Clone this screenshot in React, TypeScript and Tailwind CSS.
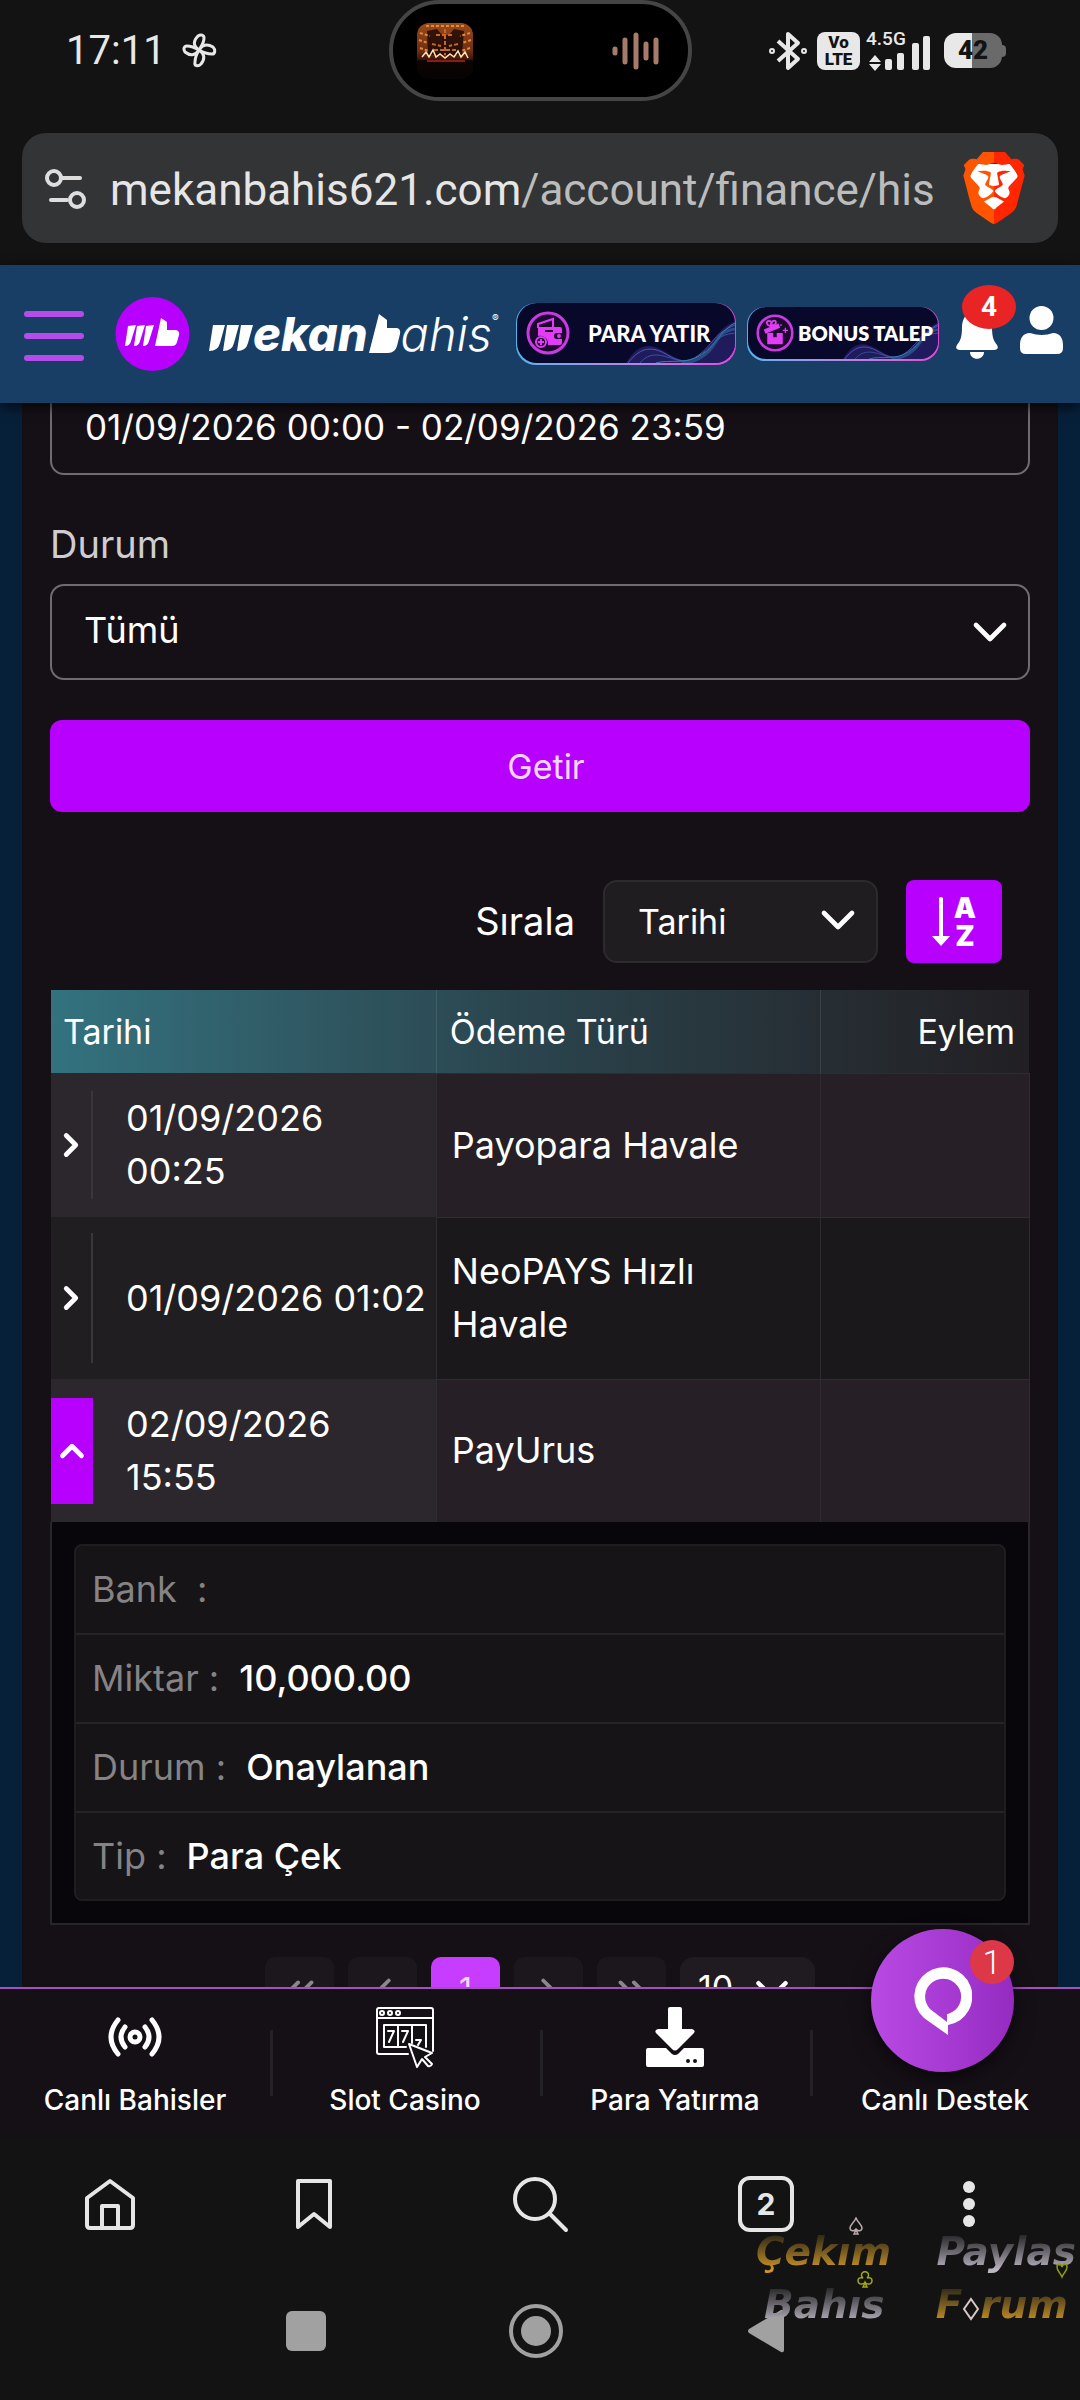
import React from "react";
import { ChevronDown, ChevronLeft, ChevronRight, ChevronsLeft, ChevronsRight, ChevronUp } from "lucide-react";
import { SiBrave } from "react-icons/si";

function StatusBar() {
  return (
    <div className="grid h-[101px] grid-cols-[1fr_303px_1fr] items-start text-[#e8e8e8]">
      <div className="flex h-[101px] items-center gap-4 pl-[66px]">
        <span className="font-[Roboto] text-[40px] leading-none">17:11</span>
        <svg width="36" height="36" viewBox="0 0 36 36" fill="none" stroke="currentColor" strokeWidth="3">
          <path d="M17 17c-6-4-6-9-1-14 3-2 6-1 6 2 0 5-2 7-5 12z" />
          <path d="M17 17c4-6 9-6 14-3 3 3 2 7-1 7-5 0-8-1-13-4z" />
          <path d="M17 17c6 4 6 9 2 14-3 3-7 2-6-2 0-4 1-7 4-12z" />
          <path d="M17 17c-4 6-9 6-14 2-2-3-1-6 2-6 4 0 7 1 12 4z" />
        </svg>
      </div>
      <div className="flex h-[101px] items-center justify-between rounded-full border-4 border-[#454545] bg-black pr-7 pl-6">
        <svg width="56" height="56" viewBox="0 0 56 56">
          <defs>
            <linearGradient id="art" x1="0" y1="0" x2="0" y2="1">
              <stop offset="0" stopColor="#9a4a1c" />
              <stop offset="0.5" stopColor="#6e2e12" />
              <stop offset="0.7" stopColor="#2c0c06" />
              <stop offset="1" stopColor="#050202" />
            </linearGradient>
            <clipPath id="artClip">
              <rect width="56" height="56" rx="12" />
            </clipPath>
          </defs>
          <g clipPath="url(#artClip)">
            <rect width="56" height="56" fill="url(#art)" />
            <path d="M10 8l10-2 5 6h7l5-6 10 2-2 24H11z" fill="#1a0804" fillOpacity=".8" />
            <path d="M9 3h38M3 10l10 3M53 10l-10 3M2 17l9 3M54 17l-9 3M3 25l9 3M53 25l-9 3" stroke="#e28a3c" strokeWidth="2" strokeDasharray="3 2" />
            <path d="M28 6v26M19 12h18M15 21l9 2M41 21l-9 2M17 27h22" stroke="#c4692b" strokeWidth="2" strokeDasharray="4 2" />
            <path d="M5 34l4-5 3 5 4-7 3 7 4-3 5 4 5-4 4 3 4-6 3 6 4-5 3 6" stroke="#ffe0b0" strokeWidth="1.5" fill="none" />
            <rect y="37" width="56" height="19" fill="#070303" fillOpacity=".85" />
            <path d="M10 38h38" stroke="#8d1a14" strokeWidth="2" />
          </g>
        </svg>
        <svg width="48" height="40" viewBox="0 0 48 40" stroke="#a67b69" strokeWidth="5" strokeLinecap="round">
          <path d="M3 18v4M13 9v22M24 4v32M34 13v14M44 9v22" />
        </svg>
      </div>
      <div className="flex h-[101px] items-center justify-end pr-[74px]">
        <svg width="38" height="40" viewBox="0 0 38 40" fill="none" stroke="currentColor" strokeWidth="4" strokeLinejoin="round">
          <path d="M9 10l20 18-10 9V3l10 9L9 30" />
          <circle cx="3" cy="20" r="1" />
          <circle cx="35" cy="20" r="1" />
        </svg>
        <div className="ml-2.5 flex h-[38px] w-[43px] flex-col items-center justify-center rounded-lg bg-[#e8e8e8] font-[Roboto] text-[17px] leading-[17px] font-black text-[#131313]">
          <span>Vo</span>
          <span>LTE</span>
        </div>
        <div className="ml-1.5 flex flex-col items-start">
          <span className="font-[Roboto] text-[19px] leading-4 font-medium">4.5G</span>
          <svg className="-mt-3" width="66" height="36" viewBox="0 0 66 36" fill="currentColor">
            <path d="M9 20l6 7H3zM9 36l6-7H3z" />
            <rect x="19" y="24" width="7" height="11" rx="2" />
            <rect x="31" y="18" width="7" height="17" rx="2" />
            <rect x="46" y="8" width="7" height="27" rx="2" />
            <rect x="57" y="1" width="7" height="34" rx="2" />
          </svg>
        </div>
        <div className="ml-3 flex items-center">
          <div className="flex h-[35px] w-[58px] items-center justify-center rounded-xl bg-linear-to-r from-[#e8e8e8] from-48% to-[#6a6a6a] to-48% font-[Roboto] text-[26px] font-black text-[#131313]">
            42
          </div>
          <div className="h-3 w-1 rounded-r bg-[#6a6a6a]" />
        </div>
      </div>
    </div>
  );
}

function AddressBar() {
  return (
    <div className="px-[22px] pt-8 pb-[22px]">
      <div className="flex h-[110px] items-center rounded-[24px] bg-[#323436] pr-[28px] pl-[22px]">
        <button type="button" aria-label="Site ayarları" className="shrink-0">
          <svg width="44" height="42" viewBox="0 0 44 42" fill="none" stroke="#dedede" strokeWidth="4" strokeLinecap="round">
            <circle cx="10" cy="11" r="7" />
            <path d="M18 11h18M7 33h16" />
            <circle cx="33" cy="33" r="7" />
          </svg>
        </button>
        <div className="ml-[22px] flex-1 overflow-hidden pt-1 font-[Roboto] text-[44px] whitespace-nowrap text-[#e6e6e6]">
          mekanbahis621.com<span className="text-[#bcbcbc]">/account/finance/his</span>
        </div>
        <button type="button" aria-label="Brave" className="relative shrink-0">
          <svg className="absolute inset-0" width="72" height="72" viewBox="0 0 24 24">
            <defs>
              <linearGradient id="braveFill">
                <stop offset="0.5" stopColor="#ff5500" />
                <stop offset="0.5" stopColor="#ff2600" />
              </linearGradient>
            </defs>
            <path d="M6 4h12l2 4-2 8-6 5-6-5-2-8z" fill="#fff" />
          </svg>
          <SiBrave size={72} className="relative [fill:url(#braveFill)]" />
        </button>
      </div>
    </div>
  );
}

function Waves() {
  return (
    <svg className="absolute right-0 bottom-0 h-full w-1/2" viewBox="0 0 110 60" preserveAspectRatio="none" fill="none">
      <path d="M0 60c12-20 24-20 38-12s24 14 36 6 14-26 36-36v42z" fill="#2f2880" fillOpacity=".6" />
      <path d="M2 60c14-18 26-16 40-8s22 8 34-2 14-20 34-28" stroke="#5a56b8" strokeWidth="1" />
      <path d="M14 60c10-12 22-8 34-4s20 2 32-8 12-16 30-18" stroke="#34599c" strokeWidth="1" />
      <path d="M30 60c14-4 30 2 46-8s18-24 34-32" stroke="#3d7fb0" strokeWidth="1" />
      <path d="M56 60c16 0 28-10 34-20s10-12 20-14" stroke="#2a6e9c" strokeWidth="3" strokeOpacity=".6" />
    </svg>
  );
}

function WalletIcon() {
  return (
    <svg className="relative shrink-0" width="44" height="44" viewBox="0 0 44 44">
      <circle cx="22" cy="22" r="20" fill="#1c0830" stroke="#c93be0" strokeWidth="3" />
      <path d="M12 17v-4l15-5v8" fill="none" stroke="#e23cf5" strokeWidth="2" />
      <path d="M12 16h22a2 2 0 0 1 2 2v4h-5a3 3 0 0 0 0 6h5v4a2 2 0 0 1-2 2H22a8 8 0 0 0-10-9z" fill="#e23cf5" />
      <path d="M19 20h8" stroke="#1c0830" strokeWidth="2" />
      <circle cx="33" cy="25" r="2" fill="#e23cf5" />
      <circle cx="15" cy="31" r="5" fill="#1c0830" stroke="#e23cf5" strokeWidth="2" />
      <path d="M15 28v6M12 31h6" stroke="#e23cf5" strokeWidth="2" />
    </svg>
  );
}

function GiftIcon() {
  return (
    <svg className="relative shrink-0" width="38" height="38" viewBox="0 0 44 44">
      <circle cx="22" cy="22" r="20" fill="#1c0830" stroke="#c93be0" strokeWidth="3" />
      <path d="M9 18l17-7 2 5-17 7z" fill="#e23cf5" />
      <path d="M17 14c-5-1-6-6-2-6s4 5 2 6c0-6 5-8 6-5s-3 4-6 5" fill="none" stroke="#e23cf5" strokeWidth="2" />
      <path d="M13 22h7v5h4v-5h7v13H13z" fill="#e23cf5" />
      <path d="M34 16v6M31 19h6M29 12v2" stroke="#e23cf5" strokeWidth="1.5" />
    </svg>
  );
}

function BrandLogo() {
  return (
    <a href="#home" aria-label="Mekanbahis" className="flex shrink-0 items-center text-white">
      <svg width="75" height="76" viewBox="0 0 75 76">
        <circle cx="37.500" cy="38" r="37" fill="#b800ff" />
        <g fill="#fff">
          <path d="M13 30l8-1-5 16q-1 5-6 5zM22 30l8-1-5 16q-1 5-6 5zM31 30l8-1-5 16q-1 5-6 5z" />
          <path d="M46 22l6 4v8h9q4 1 3 5l-2 7q-1 4-5 4H40z" />
        </g>
      </svg>
      <div className="ml-[19px] flex items-center">
        <svg className="mt-2" width="44" height="28" viewBox="0 0 44 28" fill="#fff">
          <path d="M4 1h12l-5 18q-2 8-11 8zM18 1h12l-5 18q-2 8-11 8zM32 1h12l-5 18q-2 8-11 8z" />
        </svg>
        <span className="font-[Inter] text-[47px] leading-[50px] font-extrabold italic">ekan</span>
        <svg width="33" height="40" viewBox="0 0 33 40" fill="#fff">
          <path d="M11 0l8 6v8h10q4 1 3 6l-3 12q-2 7-9 7H1z" />
        </svg>
        <span className="font-[Inter] text-[47px] leading-[50px] font-light italic">ahis</span>
        <span className="mb-8 font-[Inter] text-[10px] leading-none">®</span>
      </div>
    </a>
  );
}

function SiteHeader() {
  return (
    <header className="relative z-10 flex h-[138px] shrink-0 items-center bg-[#193e65] pr-[17px] pl-6 shadow-[0_4px_12px_rgba(0,0,0,0.7)]">
      <button type="button" aria-label="Menü" className="mt-1 flex w-[60px] shrink-0 flex-col gap-4">
        <span className="h-[6px] rounded-full bg-[#b54cea]" />
        <span className="h-[6px] rounded-full bg-[#b54cea]" />
        <span className="h-[6px] rounded-full bg-[#b54cea]" />
      </button>
      <div className="ml-[31px]">
        <BrandLogo />
      </div>
      <div className="ml-auto flex items-center">
        <div className="w-[220px] rounded-[20px] bg-linear-to-r from-[#4fb4f0] to-[#e046d8] px-px pb-[2px]">
          <button type="button" className="relative flex h-[60px] w-full items-center overflow-hidden rounded-[20px] bg-[#08082a] pl-[9px] font-[Lato] text-[22px] font-black whitespace-nowrap text-white">
            <Waves />
            <WalletIcon />
            <span className="relative ml-[18px]">PARA YATIR</span>
          </button>
        </div>
        <div className="ml-[11px] w-[192px] rounded-[18px] bg-linear-to-r from-[#4fb4f0] to-[#e046d8] px-px pb-[2px]">
          <button type="button" className="relative flex h-[52px] w-full items-center overflow-hidden rounded-[18px] bg-[#08082a] pl-[8px] font-[Lato] text-[20px] font-extrabold whitespace-nowrap text-white">
            <Waves />
            <GiftIcon />
            <span className="relative ml-[4px]">BONUS TALEP</span>
          </button>
        </div>
        <button type="button" aria-label="Bildirimler" className="relative ml-[17px]">
          <svg width="42" height="50" viewBox="0 0 42 50" fill="#fff">
            <path d="M21 2c10 0 15 7 15 16 0 11 2 14 5 18 2 3 0 5-3 5H4c-3 0-5-2-3-5 3-4 5-7 5-18C6 9 11 2 21 2zM14 43h14c0 9-14 9-14 0z" />
          </svg>
          <span className="absolute -top-6 left-[6px] flex h-[44px] w-[54px] items-center justify-center rounded-[50%] bg-[#e82424] font-[Roboto] text-[28px] font-bold text-white">4</span>
        </button>
        <button type="button" aria-label="Hesabım" className="mb-2 ml-[22px]">
          <svg width="43" height="48" viewBox="0 0 43 48" fill="#fff">
            <circle cx="21.500" cy="12" r="12" />
            <path d="M10 27q12 4 23 0c7 0 10 5 10 12v3q0 6-6 6H6q-6 0-6-6v-3c0-7 3-12 10-12z" />
          </svg>
        </button>
      </div>
    </header>
  );
}

function Filters() {
  return (
    <form onSubmit={(event) => event.preventDefault()}>
      <input
        aria-label="Tarih aralığı"
        defaultValue="01/09/2026 00:00 - 02/09/2026 23:59"
        className="-mt-6 block h-24 w-full rounded-[14px] border-2 border-[#6f6b70] bg-transparent px-[33px] text-[35px] text-white"
      />
      <label htmlFor="status" className="mt-[43px] block text-[38px] leading-[53px] text-[#cfcdcf]">
        Durum
      </label>
      <div className="relative mt-[13px]">
        <select id="status" className="block h-24 w-full appearance-none rounded-[14px] border-2 border-[#6f6b70] bg-transparent px-[32px] pb-1 text-[36px] text-white">
          <option>Tümü</option>
        </select>
        <ChevronDown className="pointer-events-none absolute top-5 right-3 text-white" size={56} strokeWidth={2} />
      </div>
      <button type="submit" className="mt-10 block h-[92px] w-full rounded-xl bg-[#b800ff] pl-3 text-[34px] text-[#f5d6ff]">
        Getir
      </button>
    </form>
  );
}

function SortBar() {
  return (
    <div className="mt-[68px] flex items-center justify-end pr-7">
      <label htmlFor="sort" className="text-[38px] leading-[53px] text-white">
        Sırala
      </label>
      <div className="relative ml-7">
        <select id="sort" className="block h-[83px] w-[275px] appearance-none rounded-[14px] border-2 border-[#2c2a2d] bg-[#1f1d20] px-[33px] text-[34px] text-white">
          <option>Tarihi</option>
        </select>
        <ChevronDown className="pointer-events-none absolute top-3 right-3 text-white" size={56} strokeWidth={2} />
      </div>
      <button type="button" aria-label="Sıralama yönü" className="ml-7 flex h-[83px] w-24 items-center justify-center rounded-lg bg-[#b800ff] text-white">
        <svg width="18" height="50" viewBox="0 0 18 50" fill="#fff">
          <path d="M7 1q2-2 4 0v38h7l-9 10-9-10h7z" />
        </svg>
        <span className="ml-1 flex flex-col items-center text-[28px] leading-7 font-black">
          <span>A</span>
          <span>Z</span>
        </span>
      </button>
    </div>
  );
}

type Transaction = { date: string; method: string; open?: boolean };

const transactions: Transaction[] = [
  { date: "01/09/2026 00:25", method: "Payopara Havale" },
  { date: "01/09/2026 01:02", method: "NeoPAYS Hızlı Havale" },
  { date: "02/09/2026 15:55", method: "PayUrus", open: true },
];

const details = [
  { label: "Bank  :", value: "" },
  { label: "Miktar :", value: "10,000.00" },
  { label: "Durum :", value: "Onaylanan" },
  { label: "Tip :", value: "Para Çek" },
];

const rowStyles = [
  { row: "h-[144px] bg-[#261f25]", date: "bg-[#2c272c]", text: "pr-20", toggle: "min-h-[108px]" },
  { row: "h-[162px] bg-[#1a181a]", date: "bg-[#201e20]", text: "", toggle: "min-h-[130px]" },
  { row: "h-[143px] bg-[#261f25]", date: "bg-[#2c272c]", text: "pr-20", toggle: "" },
];

function TransactionTable() {
  return (
    <table className="mt-[27px] w-full table-fixed border-collapse text-left text-[36px] leading-[53px] text-white">
      <colgroup>
        <col className="w-[39.4%]" />
        <col className="w-[39.3%]" />
        <col />
      </colgroup>
      <thead>
        <tr className="h-[83px] bg-linear-to-r from-[#33727f] via-[#2a434c] to-[#211f23] text-[34px]">
          <th className="border-r border-white/10 pl-[12px] font-normal">Tarihi</th>
          <th className="border-r border-white/10 pl-[13px] font-normal">Ödeme Türü</th>
          <th className="pr-[14px] text-right font-normal">Eylem</th>
        </tr>
      </thead>
      <tbody>
        {transactions.map((item, index) => (
          <tr key={item.date} className={rowStyles[index].row}>
            <td className={`border-r border-[#2f2c31] p-0 ${rowStyles[index].date}`}>
              <div className="flex items-stretch">
                {item.open ? (
                  <button type="button" aria-label="Kapat" className="flex w-[42px] shrink-0 items-center justify-center bg-[#b800ff]">
                    <ChevronUp size={38} strokeWidth={3} />
                  </button>
                ) : (
                  <button type="button" aria-label="Aç" className={`flex w-[42px] shrink-0 items-center justify-center border-r-2 border-[#3a373b] ${rowStyles[index].toggle}`}>
                    <ChevronRight size={38} strokeWidth={3} />
                  </button>
                )}
                <span className={`self-center pl-[33px] ${rowStyles[index].text}`}>{item.date}</span>
              </div>
            </td>
            <td className="border-t border-r border-[#2f2c31] pr-12 pl-[15px]">{item.method}</td>
            <td className="border-t border-r border-[#2f2c31]" />
          </tr>
        ))}
        <tr>
          <td colSpan={3} className="border-2 border-t-0 border-[#29262a] bg-[#08060a] px-[22px] pt-[22px] pb-[22px]">
            <dl className="rounded-lg border-2 border-[#1e1d20] bg-[#161416]">
              {details.map((entry) => (
                <div key={entry.label} className="flex h-[89px] items-center gap-[20px] border-b-2 border-[#252427] px-4 last:h-[86px] last:border-b-0">
                  <dt className="whitespace-pre text-[#858385]">{entry.label}</dt>
                  <dd className="font-medium">{entry.value}</dd>
                </div>
              ))}
            </dl>
          </td>
        </tr>
      </tbody>
    </table>
  );
}

function Pagination() {
  const idle = "flex h-[69px] w-[69px] items-center justify-center rounded-[10px] bg-[#1b171c] text-[#8a888a]";
  return (
    <div className="mt-8 flex justify-center gap-[14px]">
      <button type="button" aria-label="İlk sayfa" className={idle}><ChevronsLeft size={46} /></button>
      <button type="button" aria-label="Önceki sayfa" className={idle}><ChevronLeft size={46} /></button>
      <button type="button" className="flex h-[69px] w-[69px] items-center justify-center rounded-[10px] bg-[#c63dff] pb-1 text-[32px] text-[#f5d6ff]">1</button>
      <button type="button" aria-label="Sonraki sayfa" className={idle}><ChevronRight size={46} /></button>
      <button type="button" aria-label="Son sayfa" className={idle}><ChevronsRight size={46} /></button>
      <div className="relative">
        <select aria-label="Sayfa boyutu" className="h-[69px] w-[135px] appearance-none rounded-[14px] bg-[#201b21] px-[18px] pb-2 text-[34px] text-white">
          <option>10</option>
        </select>
        <ChevronDown className="pointer-events-none absolute top-1.5 right-4 text-white" size={54} />
      </div>
    </div>
  );
}

function LiveIcon() {
  return (
    <svg width="54" height="42" viewBox="0 0 54 42" fill="none" stroke="#fff" strokeWidth="5" strokeLinecap="round">
      <circle cx="27" cy="21" r="5" />
      <path d="M17 11q-8 10 0 20M37 11q8 10 0 20M10 4Q-4 21 10 38M44 4q14 17 0 34" />
    </svg>
  );
}

function SlotIcon() {
  return (
    <svg width="60" height="62" viewBox="0 0 60 62" fill="none" stroke="#fff" strokeWidth="2" strokeLinejoin="round" strokeLinecap="round">
      <path d="M33 48H4q-2 0-2-2V4q0-2 2-2h52q2 0 2 2v41M2 12h56" />
      <circle cx="7" cy="7" r="2" />
      <circle cx="15" cy="7" r="2" />
      <circle cx="23" cy="7" r="2" />
      <path d="M31 41H9V19h42v22M23 19v22M37 19v18M13 25h6l-5 11M27 25h6l-5 11M41 34h5l-3 5" />
      <path d="M34 38l8 23 5-8 6 7q3 1 4-2l-7-7 7-4z" fill="#151016" />
    </svg>
  );
}

function DepositIcon() {
  return (
    <svg width="58" height="62" viewBox="0 0 58 62" fill="#fff">
      <path d="M24 1h10q2 0 2 2v20h10q4 1 2 4L32 43q-3 3-6 0L10 27q-2-3 2-4h10V3q0-2 2-2z" />
      <path d="M2 42h18l6 6q3 2 6 0l6-6h18q2 0 2 2v15q0 2-2 2H2q-2 0-2-2V44q0-2 2-2z" />
      <circle cx="42" cy="55" r="2" fill="#151016" />
      <circle cx="49" cy="55" r="2" fill="#151016" />
    </svg>
  );
}

const shortcuts = [
  { label: "Canlı Bahisler", icon: <LiveIcon /> },
  { label: "Slot Casino", icon: <SlotIcon /> },
  { label: "Para Yatırma", icon: <DepositIcon /> },
  { label: "Canlı Destek", icon: null },
];

function ShortcutBar() {
  return (
    <nav className="relative z-10 grid h-[151px] shrink-0 grid-cols-4 border-t-2 border-[#a44fc0] bg-[#151016]">
      {shortcuts.map((item) => (
        <a key={item.label} href="#shortcut" className="group relative flex flex-col items-center pt-[17px] text-[28px] leading-10 font-medium whitespace-nowrap text-white">
          <span className="flex h-[62px] items-center">{item.icon}</span>
          <span className="mt-3">{item.label}</span>
          <span className="absolute top-[41px] left-0 h-[66px] w-[3px] bg-[#232125] group-first:hidden" />
        </a>
      ))}
      <button type="button" aria-label="Canlı destek" className="absolute -top-[60px] right-[66px] flex h-[143px] w-[143px] items-center justify-center rounded-full bg-linear-to-r from-[#b94ae4] to-[#962bc2] shadow-[0_6px_20px_rgba(0,0,0,0.6)]">
        <svg width="58" height="68" viewBox="0 0 58 68" fill="#fff" fillRule="evenodd">
          <path d="M34 68L10 51A29 29 0 1 1 34 58zM34 47A18 18 0 1 0 16 42L33 55V47z" />
        </svg>
        <span className="absolute top-[11px] right-0 flex h-11 w-11 items-center justify-center rounded-full bg-[#dc3848] font-[Roboto] text-[34px] font-light text-white">1</span>
      </button>
    </nav>
  );
}

function BrowserToolbar() {
  return (
    <nav className="grid h-[132px] shrink-0 grid-cols-[220fr_188fr_266fr_184fr_222fr] items-center justify-items-center text-[#e6e6e6]">
      <button type="button" aria-label="Ana sayfa">
        <svg width="52" height="52" viewBox="0 0 52 52" fill="none" stroke="currentColor" strokeWidth="4" strokeLinejoin="round">
          <path d="M26 3l23 17v27q0 3-3 3H6q-3 0-3-3V20z" />
          <path d="M18 50V28h16v22" />
        </svg>
      </button>
      <button type="button" aria-label="Yer imleri">
        <svg width="38" height="52" viewBox="0 0 38 52" fill="none" stroke="currentColor" strokeWidth="4" strokeLinejoin="round">
          <path d="M3 3h32v46L19 36 3 49z" />
        </svg>
      </button>
      <button type="button" aria-label="Ara">
        <svg width="58" height="58" viewBox="0 0 58 58" fill="none" stroke="currentColor" strokeWidth="4" strokeLinecap="round">
          <circle cx="23" cy="24" r="20" />
          <path d="M38 39l16 16" />
        </svg>
      </button>
      <button type="button" aria-label="Sekmeler" className="flex h-14 w-14 items-center justify-center rounded-xl border-4 border-current text-[30px] font-bold">
        2
      </button>
      <button type="button" aria-label="Diğer" className="flex flex-col gap-[5px]">
        <span className="size-3 rounded-full bg-current" />
        <span className="size-3 rounded-full bg-current" />
        <span className="size-3 rounded-full bg-current" />
      </button>
    </nav>
  );
}

function SystemNav() {
  return (
    <nav className="flex h-[130px] shrink-0 justify-center pr-2 pb-2 text-[#a1a1a1]">
      <button type="button" aria-label="Son uygulamalar" className="flex w-[230px] items-center justify-center">
        <span className="size-10 rounded-md bg-current" />
      </button>
      <button type="button" aria-label="Ana ekran" className="flex w-[230px] items-center justify-center">
        <svg width="54" height="54" viewBox="0 0 54 54">
          <circle cx="27" cy="27" r="25" fill="none" stroke="currentColor" strokeWidth="4" />
          <circle cx="27" cy="27" r="15" fill="currentColor" />
        </svg>
      </button>
      <button type="button" aria-label="Geri" className="flex w-[230px] items-center justify-center">
        <svg width="38" height="44" viewBox="0 0 38 44" fill="currentColor">
          <path d="M36 1q1 0 1 2v38q0 3-3 2L2 24q-2-2 0-4L34 1z" />
        </svg>
      </button>
    </nav>
  );
}

function Watermark() {
  const gold = "bg-linear-to-b from-[#2a2514] from-15% to-[#d09622] to-85% bg-clip-text text-transparent";
  const silver = "bg-linear-to-b from-[#222224] from-15% to-[#bdb6c4] to-85% bg-clip-text text-transparent";
  return (
    <div className="pointer-events-none absolute right-0 bottom-[69px] z-20 w-[324px] font-['DejaVu_Sans'] text-[39px] leading-[53px] font-bold whitespace-nowrap italic">
      <div className="flex justify-between pr-1">
        <span className={gold}>Çekım</span>
        <span className={silver}>Paylas</span>
      </div>
      <div className="flex justify-between pr-3 pl-2">
        <span className={silver}>Bahıs</span>
        <span className="flex items-center">
          <span className={gold}>F</span>
          <svg className="mt-2" width="18" height="24" viewBox="0 0 18 24" fill="none" stroke="#d8c8c8" strokeWidth="2">
            <path d="M9 2l7 10-7 10-7-10z" />
          </svg>
          <span className={gold}>rum</span>
        </span>
      </div>
      <svg className="absolute -top-2 left-[93px]" width="14" height="18" viewBox="0 0 14 18" fill="none" stroke="#b8a8a8" strokeWidth="1.5">
        <path d="M7 1C5 6 1 8 1 11s4 4 6 1c2 3 6 2 6-1S9 6 7 1zM7 13l-2 4h4z" />
      </svg>
      <svg className="absolute top-[46px] left-[101px]" width="16" height="18" viewBox="0 0 16 18" fill="none" stroke="#a0a812" strokeWidth="1.5">
        <path d="M6 7a3.500 3.500 0 1 1 4 0c7-2 6 7 1 6-2 0-3-2-3-2s-1 2-3 2c-5 1-6-8 1-6zM8 12l-2 4h4z" />
      </svg>
      <svg className="absolute top-[38px] right-[12px]" width="12" height="16" viewBox="0 0 12 16" fill="none" stroke="#8c9a10" strokeWidth="1.5">
        <path d="M6 14C4 9 1 8 1 4s4-4 5 0c1-4 5-4 5 0s-3 5-5 10z" />
      </svg>
    </div>
  );
}

export default function App() {
  return (
    <div className="relative flex h-screen flex-col overflow-hidden bg-[#131313] font-[Inter,sans-serif]">
      <StatusBar />
      <AddressBar />
      <SiteHeader />
      <main className="min-h-0 flex-1 overflow-hidden bg-[#07203a] px-[22px]">
        <div className="min-h-full bg-[#151016] px-7">
          <Filters />
          <SortBar />
          <TransactionTable />
          <Pagination />
        </div>
      </main>
      <ShortcutBar />
      <BrowserToolbar />
      <SystemNav />
      <Watermark />
    </div>
  );
}
